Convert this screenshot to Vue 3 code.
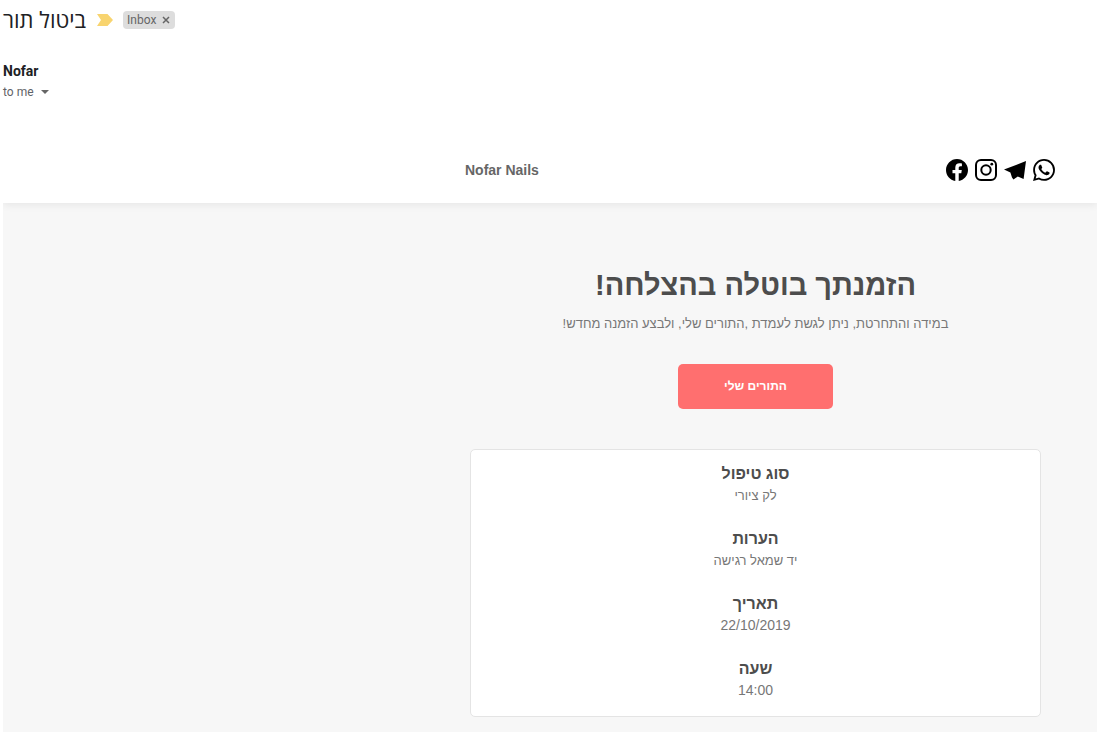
<script setup>
const details = [
  { label: 'סוג טיפול', value: 'לק ציורי' },
  { label: 'הערות', value: 'יד שמאל רגישה' },
  { label: 'תאריך', value: '22/10/2019', numeric: true },
  { label: 'שעה', value: '14:00', numeric: true },
]
</script>

<template>
  <main class="mail">
    <div class="subject">
      <h1 dir="rtl">ביטול תור</h1>
      <button class="marker" type="button" aria-label="Important">
        <svg width="16" height="12" viewBox="0 0 16 12"><path d="M0 0H10.5L16 6L10.5 12H0L4 6Z" fill="#f8d46f" /></svg>
      </button>
      <span class="label">
        Inbox
        <button type="button" aria-label="Remove label">
          <svg width="8" height="8" viewBox="0 0 8 8"><path d="M1 1L7 7M7 1L1 7" stroke="#666" stroke-width="1.5" /></svg>
        </button>
      </span>
    </div>

    <div class="sender">
      <strong>Nofar</strong>
      <button class="recipient" type="button">
        to me
        <svg width="8" height="4" viewBox="0 0 8 4"><path d="M0 0H8L4 4Z" fill="#666" /></svg>
      </button>
    </div>

    <article class="message">
      <header class="brand-bar">
        <div class="column brand-row">
          <a class="brand" href="#">Nofar Nails</a>
          <nav class="social">
            <a href="#" aria-label="Facebook">
              <svg width="22" height="22" viewBox="0 0 24 24"><path d="M24 12.07C24 5.4 18.63 0 12 0S0 5.4 0 12.07C0 18.1 4.39 23.1 10.13 24v-8.44H7.08v-3.49h3.05V9.41c0-3.02 1.79-4.69 4.53-4.69 1.31 0 2.69.24 2.69.24v2.97h-1.52c-1.49 0-1.95.93-1.95 1.88v2.26h3.33l-.53 3.49h-2.8V24C19.61 23.1 24 18.1 24 12.07Z" /></svg>
            </a>
            <a href="#" aria-label="Instagram">
              <svg width="22" height="22" viewBox="0 0 22 22" fill="none" stroke="#000" stroke-width="2"><rect x="1" y="1" width="20" height="20" rx="5" /><circle cx="11" cy="11" r="4.7" /><circle cx="16.8" cy="5.2" r="1.4" fill="#000" stroke="none" /></svg>
            </a>
            <a href="#" aria-label="Telegram">
              <svg width="22" height="22" viewBox="0 0 22 22"><path d="M0 10.6L22 2L19.6 20L13.8 17.6L9.4 20.4L8 18.6L6.4 13.4Z" /></svg>
            </a>
            <a href="#" aria-label="WhatsApp">
              <svg width="22" height="22" viewBox="0 0 24 24"><path d="M17.47 14.38c-.3-.15-1.76-.87-2.03-.97-.27-.1-.47-.15-.67.15-.2.3-.77.97-.94 1.16-.17.2-.35.22-.64.08-.3-.15-1.26-.46-2.39-1.48-.88-.79-1.48-1.76-1.65-2.06-.17-.3-.02-.46.13-.61.13-.13.3-.35.45-.52.15-.17.2-.3.3-.5.1-.2.05-.37-.03-.52-.07-.15-.67-1.61-.91-2.21-.24-.58-.49-.5-.67-.51h-.57c-.2 0-.52.07-.79.37-.27.3-1.04 1.02-1.04 2.48s1.06 2.87 1.21 3.07c.15.2 2.1 3.2 5.08 4.49.71.31 1.26.49 1.69.63.71.23 1.36.19 1.87.12.57-.09 1.76-.72 2.01-1.41.25-.69.25-1.29.17-1.41-.07-.13-.27-.2-.57-.35M12.05 21.79a9.87 9.87 0 0 1-5.03-1.38l-.36-.21-3.74.98 1-3.65-.24-.37a9.86 9.86 0 0 1-1.51-5.26c0-5.45 4.44-9.88 9.89-9.88a9.88 9.88 0 0 1 9.88 9.89c0 5.45-4.44 9.88-9.89 9.88M20.46 3.49A11.82 11.82 0 0 0 12.05 0C5.5 0 .16 5.34.16 11.89c0 2.1.55 4.14 1.59 5.95L.06 24l6.3-1.65a11.88 11.88 0 0 0 5.69 1.45c6.55 0 11.89-5.34 11.89-11.89a11.82 11.82 0 0 0-3.48-8.42Z" /></svg>
            </a>
          </nav>
        </div>
      </header>

      <div class="body">
        <div class="column content" dir="rtl">
          <h2>הזמנתך בוטלה בהצלחה!</h2>
          <p class="note">במידה והתחרטת, ניתן לגשת לעמדת ,התורים שלי, ולבצע הזמנה מחדש!</p>
          <a class="action" href="#">התורים שלי</a>
          <dl class="card">
            <div v-for="item in details" :key="item.label" class="detail">
              <dt>{{ item.label }}</dt>
              <dd :class="{ numeric: item.numeric }">{{ item.value }}</dd>
            </div>
          </dl>
        </div>
      </div>
    </article>
  </main>
</template>

<style>
body {
  margin: 0;
  background: #fff;
}
</style>

<style scoped>
.mail {
  padding: 0 0 5px 3px;
  font-family: Roboto, "Liberation Sans", sans-serif;
  color: #202124;
}

button {
  display: flex;
  align-items: center;
  padding: 0;
  border: 0;
  background: none;
  color: inherit;
  font: inherit;
}

svg {
  display: block;
}

.subject {
  display: flex;
  align-items: center;
  height: 40px;
}

h1 {
  margin: 0 11px 2px 0;
  font: 400 22px/28px "Open Sans", "Noto Sans", sans-serif;
}

.marker {
  margin-right: 10px;
}

.label {
  display: flex;
  align-items: center;
  gap: 6px;
  height: 18px;
  padding: 0 5px 0 4px;
  border-radius: 4px;
  background: #ddd;
  color: #666;
  font-size: 12px;
}

.sender {
  padding: 21px 0 37px;
}

.sender strong {
  display: block;
  font-size: 14px;
  line-height: 20px;
}

.recipient {
  gap: 7px;
  margin-top: 1px;
  color: #5f6368;
  font-size: 12px;
  line-height: 20px;
}

.message {
  font-family: "Liberation Sans", Arial, sans-serif;
  color: #777;
  font-size: 14px;
}

.brand-bar {
  position: relative;
  display: flex;
  justify-content: flex-end;
  padding: 20px 42px 22px 0;
  background: #fff;
  box-shadow: 0 2px 8px rgba(0, 0, 0, 0.07);
  clip-path: inset(0 0 -12px 0);
}

.column {
  width: 100%;
  max-width: 600px;
}

.brand-row {
  display: flex;
  align-items: center;
  justify-content: space-between;
}

.brand {
  padding-left: 10px;
  color: #666;
  font-weight: 700;
  text-decoration: none;
}

.social {
  display: flex;
  gap: 7px;
}

.body {
  display: flex;
  justify-content: flex-end;
  padding: 60px 42px 15px 0;
  background: #f7f7f7;
}

.content {
  box-sizing: border-box;
  padding: 0 14px 0 15px;
  text-align: center;
}

h2 {
  margin: 0;
  color: #4d4d4d;
  font-size: 29px;
  line-height: 44px;
}

.note {
  margin: 6px 0 30px;
  font-size: 13px;
  line-height: 21px;
}

.action {
  display: block;
  width: 155px;
  margin: 0 auto 40px;
  border-radius: 5px;
  background: #ff6f6f;
  color: #fff;
  font-size: 12px;
  font-weight: 700;
  line-height: 45px;
  text-decoration: none;
}

.card {
  display: grid;
  gap: 22px;
  margin: 0;
  padding: 13px 0 15px;
  border: 1px solid #e4e4e4;
  border-radius: 5px;
  background: #fff;
}

dt {
  color: #4d4d4d;
  font-size: 16px;
  font-weight: 700;
  line-height: 22px;
}

dd {
  margin: 0;
  font-size: 13px;
  line-height: 21px;
}

dd.numeric {
  font-size: 14px;
}
</style>
